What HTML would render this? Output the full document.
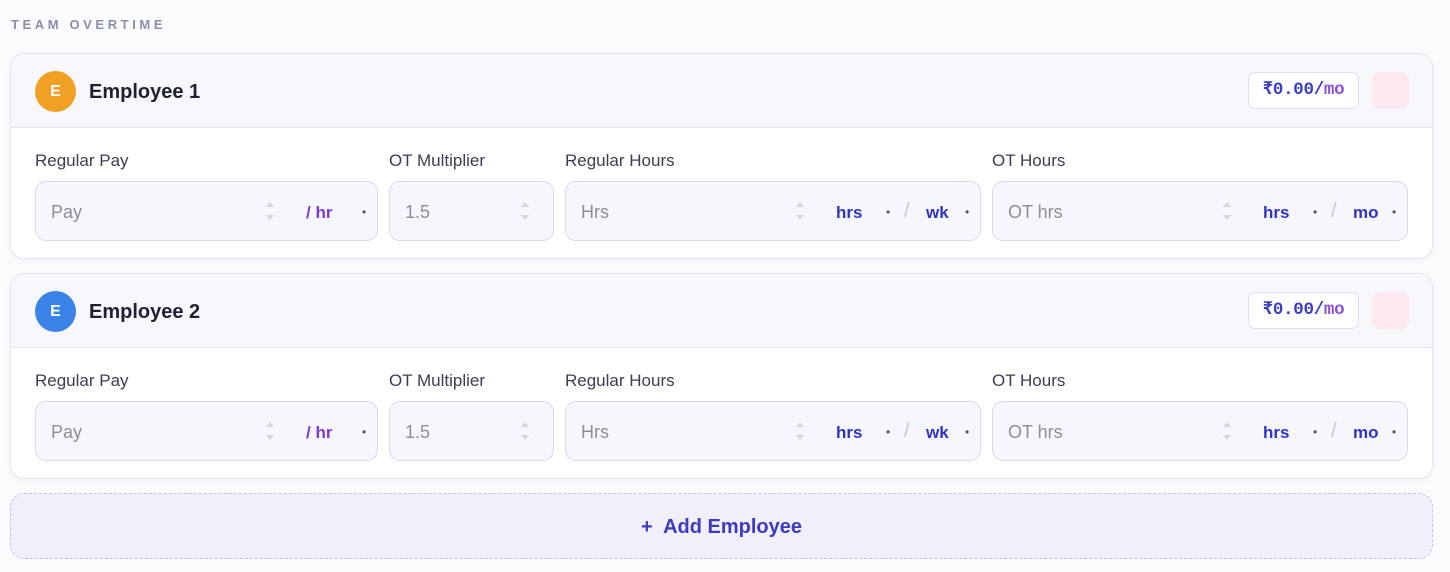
<!DOCTYPE html>
<html><head><meta charset="utf-8"><style>
*{box-sizing:border-box;margin:0;padding:0}
body{width:1450px;height:572px;background:#fbfbfe;font-family:"Liberation Sans",sans-serif;position:relative;overflow:hidden}
.abs{position:absolute}
.title{left:11px;top:17px;font-size:13px;font-weight:bold;letter-spacing:3.6px;color:#8a8fa8}
.card{left:10px;width:1423px;height:206px;border:1px solid #e2e4f0;border-radius:14px;background:#fff;box-shadow:0 2px 6px rgba(120,120,170,.08);overflow:hidden}
.hdr{left:0;top:0;width:100%;height:74px;background:#f7f8fc;border-bottom:1px solid #e0e2ee}
.av{left:24px;top:17px;width:41px;height:41px;border-radius:50%;color:#fff;font-size:16px;font-weight:bold;text-align:center;line-height:41px}
.name{left:78px;top:27px;font-size:20px;font-weight:bold;color:#1e2033}
.badge{left:1237px;top:18px;width:111px;height:37px;border:1px solid #dcdff0;border-radius:7px;background:#fff;font-family:"Liberation Mono",monospace;font-weight:bold;font-size:17.5px;color:#3b3fc4;text-align:center;line-height:35px;letter-spacing:-0.3px}
.badge span{color:#8a4fd8}
.del{left:1361px;top:18px;width:37px;height:37px;border-radius:8px;background:#fbe9ef}
.lbl{top:97px;font-size:17px;color:#3b3d52}
.inp{top:127px;height:60px;border:1px solid #d6d9ea;border-radius:11px;background:#f6f7fd}
.ph{top:20px;left:15px;font-size:18px;color:#8b8d99}
.sp{top:16px;width:10px;height:26px}
.u{top:21px;font-size:17px;font-weight:bold;color:#2e33c4}
.dot{top:23px;font-size:12px;color:#555}
.sl{top:18px;font-size:20px;color:#c5c7d3}
.add{left:10px;top:493px;width:1423px;height:66px;border:1.5px dashed #c5c0e8;border-radius:14px;background:#f2effd;text-align:center;line-height:66px;font-size:20px;color:#3a3cbf;font-weight:bold}
</style></head><body>
<div class="abs title">TEAM OVERTIME</div>

<div class="abs card" style="top:53px">
 <div class="abs hdr">
  <div class="abs av" style="background:#f0a024">E</div>
  <div class="abs name">Employee 1</div>
  <div class="abs badge">₹0.00/<span>mo</span></div>
  <div class="abs del"></div>
 </div>
 <div class="abs lbl" style="left:24px">Regular Pay</div>
 <div class="abs lbl" style="left:378px">OT Multiplier</div>
 <div class="abs lbl" style="left:554px">Regular Hours</div>
 <div class="abs lbl" style="left:981px">OT Hours</div>
 <div class="abs inp" style="left:24px;width:343px">
  <div class="abs ph">Pay</div>
  <svg class="abs sp" style="left:229px" viewBox="0 0 10 26"><path d="M1 9 L5 4 L9 9Z M1 17 L5 22 L9 17Z" fill="#d3d5df"/></svg>
  <div class="abs u" style="left:270px;color:#7b3bd6">/ hr</div>
  <div class="abs dot" style="left:326px">•</div>
 </div>
 <div class="abs inp" style="left:378px;width:165px">
  <div class="abs ph">1.5</div>
  <svg class="abs sp" style="left:130px" viewBox="0 0 10 26"><path d="M1 9 L5 4 L9 9Z M1 17 L5 22 L9 17Z" fill="#d3d5df"/></svg>
 </div>
 <div class="abs inp" style="left:554px;width:416px">
  <div class="abs ph">Hrs</div>
  <svg class="abs sp" style="left:229px" viewBox="0 0 10 26"><path d="M1 9 L5 4 L9 9Z M1 17 L5 22 L9 17Z" fill="#d3d5df"/></svg>
  <div class="abs u" style="left:270px">hrs</div>
  <div class="abs dot" style="left:320px">•</div>
  <div class="abs sl" style="left:338px">/</div>
  <div class="abs u" style="left:360px">wk</div>
  <div class="abs dot" style="left:399px">•</div>
 </div>
 <div class="abs inp" style="left:981px;width:416px">
  <div class="abs ph">OT hrs</div>
  <svg class="abs sp" style="left:229px" viewBox="0 0 10 26"><path d="M1 9 L5 4 L9 9Z M1 17 L5 22 L9 17Z" fill="#d3d5df"/></svg>
  <div class="abs u" style="left:270px">hrs</div>
  <div class="abs dot" style="left:320px">•</div>
  <div class="abs sl" style="left:338px">/</div>
  <div class="abs u" style="left:360px">mo</div>
  <div class="abs dot" style="left:399px">•</div>
 </div>
</div>

<div class="abs card" style="top:273px">
 <div class="abs hdr">
  <div class="abs av" style="background:#3b82e6">E</div>
  <div class="abs name">Employee 2</div>
  <div class="abs badge">₹0.00/<span>mo</span></div>
  <div class="abs del"></div>
 </div>
 <div class="abs lbl" style="left:24px">Regular Pay</div>
 <div class="abs lbl" style="left:378px">OT Multiplier</div>
 <div class="abs lbl" style="left:554px">Regular Hours</div>
 <div class="abs lbl" style="left:981px">OT Hours</div>
 <div class="abs inp" style="left:24px;width:343px">
  <div class="abs ph">Pay</div>
  <svg class="abs sp" style="left:229px" viewBox="0 0 10 26"><path d="M1 9 L5 4 L9 9Z M1 17 L5 22 L9 17Z" fill="#d3d5df"/></svg>
  <div class="abs u" style="left:270px;color:#7b3bd6">/ hr</div>
  <div class="abs dot" style="left:326px">•</div>
 </div>
 <div class="abs inp" style="left:378px;width:165px">
  <div class="abs ph">1.5</div>
  <svg class="abs sp" style="left:130px" viewBox="0 0 10 26"><path d="M1 9 L5 4 L9 9Z M1 17 L5 22 L9 17Z" fill="#d3d5df"/></svg>
 </div>
 <div class="abs inp" style="left:554px;width:416px">
  <div class="abs ph">Hrs</div>
  <svg class="abs sp" style="left:229px" viewBox="0 0 10 26"><path d="M1 9 L5 4 L9 9Z M1 17 L5 22 L9 17Z" fill="#d3d5df"/></svg>
  <div class="abs u" style="left:270px">hrs</div>
  <div class="abs dot" style="left:320px">•</div>
  <div class="abs sl" style="left:338px">/</div>
  <div class="abs u" style="left:360px">wk</div>
  <div class="abs dot" style="left:399px">•</div>
 </div>
 <div class="abs inp" style="left:981px;width:416px">
  <div class="abs ph">OT hrs</div>
  <svg class="abs sp" style="left:229px" viewBox="0 0 10 26"><path d="M1 9 L5 4 L9 9Z M1 17 L5 22 L9 17Z" fill="#d3d5df"/></svg>
  <div class="abs u" style="left:270px">hrs</div>
  <div class="abs dot" style="left:320px">•</div>
  <div class="abs sl" style="left:338px">/</div>
  <div class="abs u" style="left:360px">mo</div>
  <div class="abs dot" style="left:399px">•</div>
 </div>
</div>

<div class="abs add">+&nbsp; Add Employee</div>
</body></html>
